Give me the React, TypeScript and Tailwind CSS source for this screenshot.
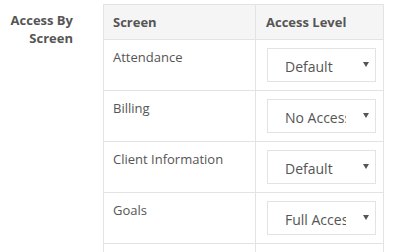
import React from "react";

const rows: { name: string; value: string }[] = [
  { name: "Attendance", value: "Default" },
  { name: "Billing", value: "No Access" },
  { name: "Client Information", value: "Default" },
  { name: "Goals", value: "Full Access" },
  { name: "", value: "" },
];

function FakeSelect({ value }: { value: string }) {
  return (
    <div className="flex h-[34px] w-[109px] items-center border border-[#e3e3e3] bg-white pl-[17px] pr-[6px]">
      <span className="w-[61px] overflow-hidden whitespace-nowrap pt-[3px] text-[14px] leading-[18px] text-[#555]">
        {value}
      </span>
      <span className="ml-auto mb-[1px] h-0 w-0 border-x-[3px] border-t-[5px] border-x-transparent border-t-[#555]" />
    </div>
  );
}

export default function App() {
  return (
    <div
      className="flex h-[252px] w-[412px] overflow-hidden bg-white"
      style={{ fontFamily: '"Open Sans", sans-serif' }}
    >
      <div className="w-[73px] shrink-0 pt-[11px] text-right text-[13px] font-bold leading-[18px] text-[#555]">
        Access By
        <br />
        Screen
      </div>
      <div className="ml-[30px] mt-[4px] shrink-0">
        <table className="w-[281px] border-collapse text-[13px] leading-[18px] text-[#555]">
          <thead>
            <tr className="bg-[#f5f5f5]">
              <th className="w-[155px] border border-[#e3e3e3] px-[9px] py-[8px] text-left font-bold">
                Screen
              </th>
              <th className="border border-[#e3e3e3] px-[10px] py-[8px] text-left font-bold">
                Access Level
              </th>
            </tr>
          </thead>
          <tbody>
            {rows.map((r, i) => (
              <tr key={i}>
                <td className="h-[51px] border border-[#e3e3e3] px-[9px] pt-[8px] pb-[8px] align-top">
                  {r.name}
                </td>
                <td className="border border-[#e3e3e3] pl-[11px] pr-[7px] py-[8px] align-top">
                  {r.value && <FakeSelect value={r.value} />}
                </td>
              </tr>
            ))}
          </tbody>
        </table>
      </div>
    </div>
  );
}
